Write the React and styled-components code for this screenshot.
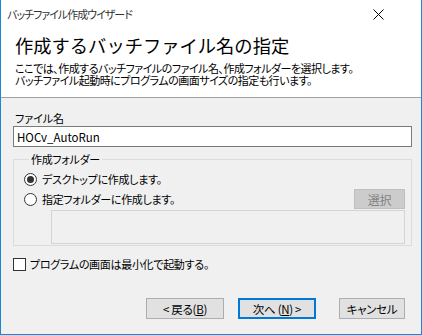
import React from 'react';
import styled, { createGlobalStyle } from 'styled-components';

const GlobalStyle = createGlobalStyle`
  body {
    margin: 0;
    background: #ffffff;
    font-family: "Noto Sans CJK JP", "Noto Sans", sans-serif;
  }
`;

const Window = styled.div`
  width: 422px;
  height: 335px;
  box-sizing: border-box;
  border: 1px solid #1c86d8;
  border-top: none;
  background: #f0f0f0;
  display: flex;
  flex-direction: column;
  color: #000;
  font-size: 11px;
  letter-spacing: -0.3px;
  font-feature-settings: "palt";
`;

const TitleBar = styled.div`
  height: 28px;
  background: #fff;
  display: flex;
  align-items: center;
  justify-content: space-between;
  padding: 0 37px 0 6px;
  color: #333;
  letter-spacing: -1px;
`;

const CloseBox = styled.svg`
  width: 11px;
  height: 11px;
`;

const Header = styled.div`
  height: 70px;
  box-sizing: border-box;
  background: #fff;
  border-bottom: 1px solid #a0a0a0;
  padding: 5px 0 0 14px;
`;

const HeaderTitle = styled.div`
  font-size: 18.3px;
  line-height: 24px;
  letter-spacing: 0;
  font-feature-settings: normal;
`;

const HeaderDesc = styled.div`
  margin-top: 5px;
`;

const DescLine = styled.div`
  height: 12px;
  line-height: 12px;
  letter-spacing: -0.5px;
  white-space: nowrap;
`;

const Body = styled.div`
  flex: 1;
  display: flex;
  flex-direction: column;
  padding: 0 9px 15px 12px;
`;

const FieldLabel = styled.div`
  margin-top: 12px;
  line-height: 16px;
  padding-left: 2px;
  letter-spacing: 0;
`;

const TextInput = styled.div`
  height: 21px;
  box-sizing: border-box;
  border: 1px solid #7a7a7a;
  background: #fff;
  display: flex;
  align-items: center;
  padding-left: 3px;
  font-size: 11.5px;
  letter-spacing: 0;
`;

const Group = styled.fieldset`
  margin: 4px 0 0;
  padding: 2px 6px 1px 10px;
  border: 1px solid #dcdcdc;
  min-width: 0;
`;

const Legend = styled.legend`
  padding: 0 2px;
  margin-left: 5px;
  line-height: 16px;
`;

const OptionRow = styled.div`
  display: flex;
  align-items: center;
  height: ${p => p.$tall ? 20 : 16}px;
  margin-top: ${p => p.$gap}px;
`;

const RadioDot = styled.span`
  width: 13px;
  height: 13px;
  box-sizing: border-box;
  border-radius: 50%;
  border: 1px solid #333;
  background: #fff;
  display: inline-flex;
  align-items: center;
  justify-content: center;
  margin-right: 5px;
  &::after {
    content: "";
    width: 7px;
    height: 7px;
    border-radius: 50%;
    background: ${p => p.$checked ? '#333' : 'transparent'};
  }
`;

const SelectButton = styled.div`
  margin-left: auto;
  width: 51px;
  height: 20px;
  box-sizing: border-box;
  background: #cccccc;
  border: 1px solid #bfbfbf;
  color: #838383;
  display: flex;
  align-items: center;
  justify-content: center;
  font-size: 12px;
`;

const FolderBox = styled.div`
  margin: 1px 0 0 27px;
  height: 34px;
  box-sizing: border-box;
  border: 1px solid #d4d4d4;
  background: #f0f0f0;
`;

const CheckRow = styled.div`
  display: flex;
  align-items: center;
  height: 16px;
  margin-top: 10px;
`;

const CheckBox = styled.span`
  width: 13px;
  height: 13px;
  box-sizing: border-box;
  border: 1px solid #333;
  background: #fff;
  margin-right: 4px;
`;

const ButtonRow = styled.div`
  margin-top: auto;
  display: flex;
  justify-content: flex-end;
  padding-right: 7px;
`;

const Button = styled.div`
  width: ${p => p.$w}px;
  height: 21px;
  box-sizing: border-box;
  margin-left: ${p => p.$gap}px;
  background: #e1e1e1;
  border: ${p => p.$primary ? '2px solid #0078d7' : '1px solid #adadad'};
  display: flex;
  align-items: center;
  justify-content: center;
  font-size: 11.5px;
  white-space: pre;
  u { text-decoration: underline; }
`;

export default function App() {
  return (
    <Window>
      <GlobalStyle />
      <TitleBar>
        <span>バッチファイル作成ウイザード</span>
        <CloseBox viewBox="0 0 11 11">
          <path d="M0.5 0.5 L10.5 10.5 M10.5 0.5 L0.5 10.5" stroke="#000" strokeWidth="1" fill="none" />
        </CloseBox>
      </TitleBar>
      <Header>
        <HeaderTitle>作成するバッチファイル名の指定</HeaderTitle>
        <HeaderDesc>
          <DescLine>ここでは、作成するバッチファイルのファイル名、作成フォルダーを選択します。</DescLine>
          <DescLine>バッチファイル起動時にプログラムの画面サイズの指定も行います。</DescLine>
        </HeaderDesc>
      </Header>
      <Body>
        <FieldLabel>ファイル名</FieldLabel>
        <TextInput>HOCv_AutoRun</TextInput>
        <Group>
          <Legend>作成フォルダー</Legend>
          <OptionRow $gap={2}>
            <RadioDot $checked />
            デスクトップに作成します。
          </OptionRow>
          <OptionRow $tall $gap={2}>
            <RadioDot />
            指定フォルダーに作成します。
            <SelectButton>選択</SelectButton>
          </OptionRow>
          <FolderBox />
        </Group>
        <CheckRow>
          <CheckBox />
          プログラムの画面は最小化で起動する。
        </CheckRow>
        <ButtonRow>
          <Button $w={78} $gap={0}>{'< 戻る('}<u>B</u>{')'}</Button>
          <Button $w={78} $gap={14} $primary>{'次へ ('}<u>N</u>{') >'}</Button>
          <Button $w={66} $gap={23}>キャンセル</Button>
        </ButtonRow>
      </Body>
    </Window>
  );
}
